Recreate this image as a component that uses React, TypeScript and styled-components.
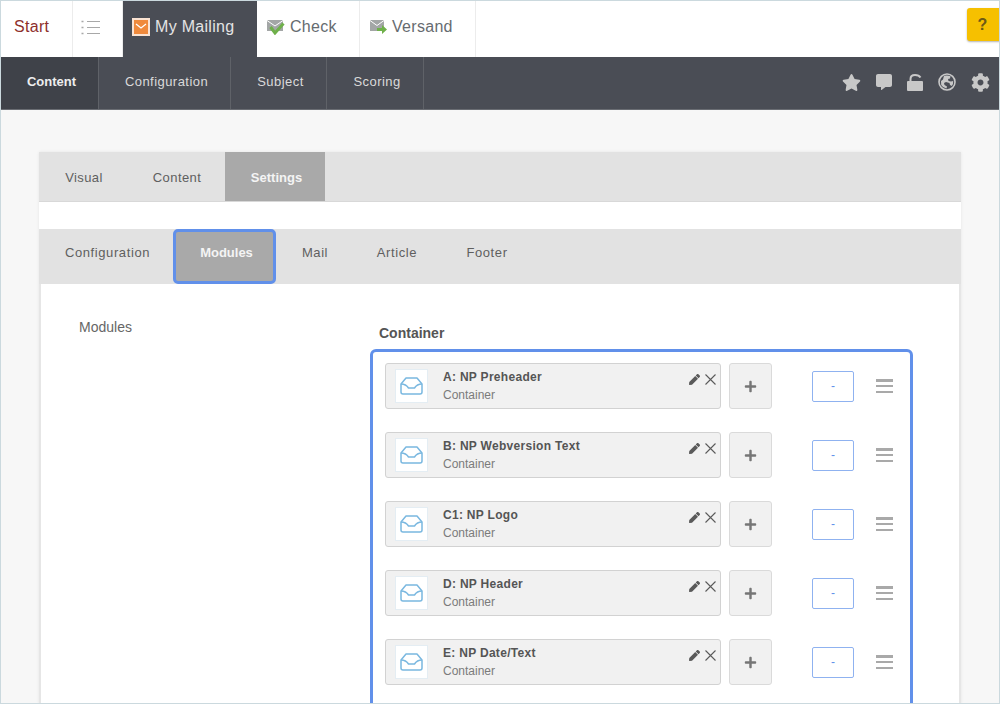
import React from "react";
import styled, { createGlobalStyle } from "styled-components";
import { FaStar, FaCommentAlt, FaCog, FaPen, FaPlus } from "react-icons/fa";

const GlobalStyle = createGlobalStyle`
  html, body {
    margin: 0;
    padding: 0;
    background: #fff;
    font-family: "Liberation Sans", Arial, sans-serif;
  }
`;

const Frame = styled.div`
  position: relative;
  width: 1000px;
  height: 704px;
  box-sizing: border-box;
  border: 1px solid #cbd9de;
  overflow: hidden;
  background: #f7f7f7;
`;

const TopBar = styled.div`
  display: flex;
  height: 56px;
  background: #fff;
`;

const TopTab = styled.div<{ $w: number; $pad: number; $active?: boolean; $red?: boolean }>`
  width: ${(p) => p.$w}px;
  box-sizing: border-box;
  display: flex;
  align-items: center;
  gap: 5px;
  font-size: 16px;
  letter-spacing: 0.3px;
  padding: 0 0 4px ${(p) => p.$pad}px;
  border-right: 1px solid ${(p) => (p.$active ? "transparent" : "#ececec")};
  color: ${(p) => (p.$active ? "#e4e4e4" : p.$red ? "#8e2f2c" : "#666b70")};
  background: ${(p) => (p.$active ? "#4a4d55" : "#fff")};
`;

const HelpButton = styled.div`
  position: absolute;
  top: 7px;
  right: -3px;
  width: 35px;
  height: 33px;
  border-radius: 3px;
  background: #f6c000;
  box-shadow: 0 1px 2px rgba(0, 0, 0, 0.3);
  color: #6d5a16;
  font-size: 16px;
  font-weight: 700;
  display: flex;
  align-items: center;
  justify-content: center;
  padding-right: 4px;
  box-sizing: border-box;
`;

const DarkBar = styled.div`
  display: flex;
  justify-content: space-between;
  height: 53px;
  background: #4a4d55;
  border-bottom: 1px solid #6a6d73;
  box-sizing: border-box;
`;

const DarkTabs = styled.div`
  display: flex;
`;

const DarkTab = styled.div<{ $w: number; $active?: boolean }>`
  width: ${(p) => p.$w}px;
  box-sizing: border-box;
  display: flex;
  align-items: center;
  justify-content: center;
  padding: 0 0 3px 4px;
  font-size: 13px;
  letter-spacing: ${(p) => (p.$active ? "0" : "0.45px")};
  color: ${(p) => (p.$active ? "#eeeeee" : "#dadada")};
  font-weight: ${(p) => (p.$active ? 700 : 400)};
  background: ${(p) => (p.$active ? "#3f4249" : "transparent")};
  border-right: 1px solid #5f6268;
`;

const DarkIcons = styled.div`
  display: flex;
  align-items: center;
  gap: 15px;
  padding-right: 9px;
  padding-bottom: 2px;
  color: #c8c8c8;
  font-size: 19px;
`;

const Page = styled.div`
  padding: 42px 38px 0;
`;

const Card = styled.div`
  box-shadow: 0 0 3px rgba(0, 0, 0, 0.08);
  background: #fff;
`;

const MainTabs = styled.div`
  display: flex;
  height: 49px;
  background: #e2e2e2;
  border-bottom: 1px solid #d8d8d8;
`;

const MainTab = styled.div<{ $w: number; $active?: boolean }>`
  width: ${(p) => p.$w}px;
  box-sizing: border-box;
  display: flex;
  align-items: center;
  justify-content: center;
  padding: 1px 0 0 ${(p) => (p.$active ? "3px" : "0")};
  font-size: 13px;
  letter-spacing: ${(p) => (p.$active ? "0" : "0.4px")};
  color: ${(p) => (p.$active ? "#f4f4f4" : "#5f5f5f")};
  font-weight: ${(p) => (p.$active ? 700 : 400)};
  background: ${(p) => (p.$active ? "#a9a9a9" : "transparent")};
`;

const SubTabs = styled.div`
  display: flex;
  align-items: stretch;
  height: 55px;
  margin-top: 27px;
  padding-left: 1px;
  background: #e2e2e2;
`;

const SubTab = styled.div<{ $w: number; $active?: boolean; $nudge?: number }>`
  width: ${(p) => p.$w}px;
  box-sizing: border-box;
  display: flex;
  align-items: center;
  justify-content: center;
  padding: 0 0 8px ${(p) => p.$nudge ?? 0}px;
  font-size: 13px;
  letter-spacing: ${(p) => (p.$active ? "0" : "0.6px")};
  color: ${(p) => (p.$active ? "#f4f4f4" : "#5f5f5f")};
  font-weight: ${(p) => (p.$active ? 700 : 400)};
  background: ${(p) => (p.$active ? "#a9a9a9" : "transparent")};
  border: ${(p) => (p.$active ? "3px solid #6190ea" : "none")};
  border-radius: ${(p) => (p.$active ? "5px" : "0")};
`;

const Body = styled.div`
  display: grid;
  grid-template-columns: 329px 543px;
  height: 420px;
  border-left: 2px solid #e6e6e6;
  border-right: 2px solid #e6e6e6;
`;

const SideLabel = styled.div`
  padding: 35px 0 0 38px;
  font-size: 14px;
  color: #666;
`;

const ContainerTitle = styled.div`
  margin: 41px 0 8px 9px;
  height: 16px;
  line-height: 16px;
  font-size: 14px;
  font-weight: 700;
  color: #555;
`;

const BlueBox = styled.div`
  display: flex;
  flex-direction: column;
  gap: 23px;
  height: 400px;
  box-sizing: border-box;
  padding: 11px 0 0 12px;
  border: 3px solid #6190ea;
  border-radius: 6px;
`;

const Row = styled.div`
  display: flex;
  align-items: center;
  height: 46px;
`;

const ModuleCard = styled.div`
  position: relative;
  display: flex;
  align-items: center;
  box-sizing: border-box;
  width: 336px;
  height: 46px;
  margin-right: 8px;
  padding-left: 9px;
  background: #f1f1f1;
  border: 1px solid #d2d2d2;
  border-radius: 3px;
`;

const Thumb = styled.div`
  width: 33px;
  height: 34px;
  box-sizing: border-box;
  flex: none;
  display: flex;
  align-items: center;
  justify-content: center;
  background: #fff;
  border: 1px solid #e4edf3;
`;

const ModuleText = styled.div`
  margin-left: 15px;
  padding-top: 1px;
  flex: 1;
`;

const ModuleName = styled.div`
  font-size: 12px;
  font-weight: 700;
  letter-spacing: 0.3px;
  line-height: 15px;
  color: #555;
`;

const ModuleType = styled.div`
  margin-top: 3px;
  font-size: 12px;
  line-height: 15px;
  color: #7b7b7b;
`;

const CardActions = styled.div`
  position: absolute;
  top: 10px;
  right: 4px;
  display: flex;
  align-items: center;
  gap: 5px;
  color: #5a5a5a;
`;

const PlusButton = styled.div`
  width: 43px;
  height: 46px;
  box-sizing: border-box;
  display: flex;
  align-items: center;
  justify-content: center;
  padding-top: 1px;
  background: #f1f1f1;
  border: 1px solid #dadada;
  border-radius: 3px;
  color: #767676;
  font-size: 13px;
`;

const OrderInput = styled.div`
  width: 42px;
  height: 31px;
  box-sizing: border-box;
  margin-left: 40px;
  display: flex;
  align-items: center;
  justify-content: center;
  background: #fff;
  border: 1px solid #8fb2f0;
  border-radius: 2px;
  font-size: 12px;
  color: #6190ea;
`;

const Burger = styled.div`
  width: 17px;
  height: 14px;
  margin-left: 22px;
  display: flex;
  flex-direction: column;
  justify-content: space-between;
  span {
    display: block;
    height: 2.5px;
    background: #a9a9a9;
  }
`;

const TrayIcon = () => (
  <svg width="23" height="18" viewBox="0 0 23 18" fill="none" stroke="#7ab8e0" strokeWidth="1.5" strokeLinejoin="round">
    <path d="M1 7 L6 1 H17 L22 7 V15 Q22 17 20 17 H3 Q1 17 1 15 Z" />
    <path d="M1 7 Q6 7 8.5 11 H14.5 Q17 7 22 7" />
  </svg>
);

const ListIcon = () => (
  <svg width="19" height="15" viewBox="0 0 19 15" stroke="#a8a8a8" strokeWidth="1">
    <path d="M6 1.5 H19 M6 7.5 H19 M6 13.5 H19" />
    <path d="M0.5 1.5 H2.5 M0.5 7.5 H2.5 M0.5 13.5 H2.5" strokeWidth="1.4" />
  </svg>
);

const MailBadge = () => (
  <svg width="18" height="18" viewBox="0 0 18 18">
    <rect x="0" y="0" width="18" height="18" fill="#fbe3d2" />
    <rect x="2" y="2" width="14" height="14" fill="#f08a3c" />
    <path d="M4 6 L9 10 L14 6" fill="none" stroke="#fff" strokeWidth="1.3" />
  </svg>
);

const CheckMail = () => (
  <svg width="18" height="16" viewBox="0 0 18 16">
    <rect x="0" y="1" width="16" height="11" fill="#a3a6a6" />
    <path d="M0 1.5 L8 7 L16 1.5" fill="none" stroke="#fff" strokeWidth="1" />
    <path d="M3.5 8 L8 14 L16.5 4.5" fill="none" stroke="#6fb04a" strokeWidth="3" />
  </svg>
);

const SendMail = () => (
  <svg width="17" height="15" viewBox="0 0 17 15">
    <rect x="0" y="0" width="14" height="11" fill="#a3a6a6" />
    <path d="M0 0.5 L7 5.5 L14 0.5" fill="none" stroke="#fff" strokeWidth="1" />
    <path d="M7 8 H12 V5 L17 9.5 L12 14 V11 H7 Z" fill="#6fb04a" />
  </svg>
);

const LockIcon = () => (
  <svg width="16" height="17" viewBox="0 0 16 17" fill="currentColor">
    <rect x="0" y="7" width="16" height="10" rx="1" />
    <path d="M3.5 7 V5 Q3.5 1 8 1 Q12 1 13.5 3.5" fill="none" stroke="currentColor" strokeWidth="2" />
  </svg>
);

const GlobeIcon = () => (
  <svg width="18" height="18" viewBox="0 0 18 18" fill="currentColor">
    <circle cx="9" cy="9" r="8" fill="none" stroke="currentColor" strokeWidth="1.6" />
    <path d="M6 2.8 Q9.5 1.8 12.5 3.2 L12 5.5 L10 6 L10.5 8 L13 8.5 L15.2 8 Q15.5 11 13.8 13 L12 12 L11.5 10 L8 9 L6 10 L6.5 12 L9 13.5 L8.5 15.4 Q5 15 3.2 12 L3 8 L5 6.5 Z" />
  </svg>
);

const CloseIcon = () => (
  <svg width="11" height="11" viewBox="0 0 11 11" stroke="#5a5a5a" strokeWidth="1.1">
    <path d="M0.5 0.5 L10.5 10.5 M10.5 0.5 L0.5 10.5" />
  </svg>
);

const modules = ["A: NP Preheader", "B: NP Webversion Text", "C1: NP Logo", "D: NP Header", "E: NP Date/Text"];

const App = () => {
  return (
    <>
      <GlobalStyle />
      <Frame>
        <TopBar>
          <TopTab $w={72} $pad={13} $red>Start</TopTab>
          <TopTab $w={50} $pad={8}>
            <ListIcon />
          </TopTab>
          <TopTab $w={134} $pad={9} $active>
            <MailBadge />
            My Mailing
          </TopTab>
          <TopTab $w={103} $pad={10}>
            <CheckMail />
            Check
          </TopTab>
          <TopTab $w={116} $pad={10}>
            <SendMail />
            Versand
          </TopTab>
        </TopBar>
        <HelpButton>?</HelpButton>
        <DarkBar>
          <DarkTabs>
            <DarkTab $w={98} $active>Content</DarkTab>
            <DarkTab $w={132}>Configuration</DarkTab>
            <DarkTab $w={96}>Subject</DarkTab>
            <DarkTab $w={97}>Scoring</DarkTab>
          </DarkTabs>
          <DarkIcons>
            <FaStar />
            <FaCommentAlt size={16} />
            <LockIcon />
            <GlobeIcon />
            <FaCog />
          </DarkIcons>
        </DarkBar>
        <Page>
          <Card>
            <MainTabs>
              <MainTab $w={90}>Visual</MainTab>
              <MainTab $w={96}>Content</MainTab>
              <MainTab $w={100} $active>Settings</MainTab>
            </MainTabs>
            <SubTabs>
              <SubTab $w={133} $nudge={2}>Configuration</SubTab>
              <SubTab $w={103} $active $nudge={4}>Modules</SubTab>
              <SubTab $w={78}>Mail</SubTab>
              <SubTab $w={86}>Article</SubTab>
              <SubTab $w={94}>Footer</SubTab>
            </SubTabs>
            <Body>
              <SideLabel>Modules</SideLabel>
              <div>
                <ContainerTitle>Container</ContainerTitle>
                <BlueBox>
                  {modules.map((name) => (
                    <Row key={name}>
                      <ModuleCard>
                        <Thumb>
                          <TrayIcon />
                        </Thumb>
                        <ModuleText>
                          <ModuleName>{name}</ModuleName>
                          <ModuleType>Container</ModuleType>
                        </ModuleText>
                        <CardActions>
                          <FaPen size={11} />
                          <CloseIcon />
                        </CardActions>
                      </ModuleCard>
                      <PlusButton>
                        <FaPlus />
                      </PlusButton>
                      <OrderInput>-</OrderInput>
                      <Burger>
                        <span />
                        <span />
                        <span />
                      </Burger>
                    </Row>
                  ))}
                </BlueBox>
              </div>
            </Body>
          </Card>
        </Page>
      </Frame>
    </>
  );
};

export default App;
